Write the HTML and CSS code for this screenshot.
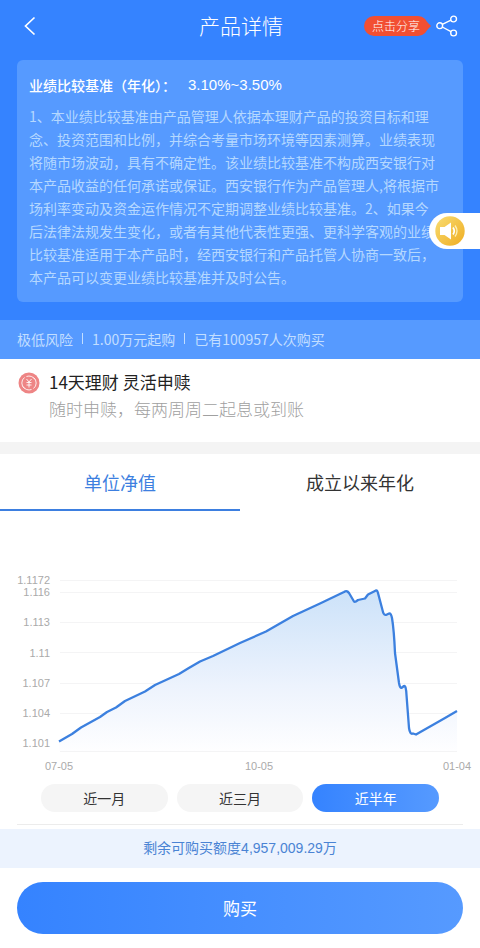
FILE: index.html
```html
<!DOCTYPE html>
<html lang="zh-CN">
<head>
<meta charset="utf-8">
<meta name="viewport" content="width=device-width, initial-scale=1">
<title>产品详情</title>
<link rel="stylesheet" href="styles.css">
</head>
<body>
<header class="hero">
  <nav class="topbar">
    <button class="icon-button back" type="button" aria-label="返回">
      <svg width="12" height="20" viewBox="0 0 12 20"><path d="M10.500 1.500 1.500 10l9 8.500" fill="none" stroke="#fff" stroke-width="1.700"/></svg>
    </button>
    <h1 class="title">产品详情</h1>
    <div class="share">
      <span class="share-tip">点击分享</span>
      <button class="icon-button" type="button" aria-label="分享">
        <svg width="22" height="22" viewBox="0 0 22 22" fill="none" stroke="#fff" stroke-width="1.400"><circle cx="3.700" cy="10.700" r="2.900"/><circle cx="17.600" cy="4" r="2.900"/><circle cx="17.600" cy="18" r="2.900"/><path d="M6.300 9.400 15 5.200M6.300 12l8.700 4.700"/></svg>
      </button>
    </div>
  </nav>
  <section class="benchmark">
    <h2 class="benchmark-title">业绩比较基准（年化）：<span class="rate">3.10%~3.50%</span></h2>
    <p class="benchmark-text">1、本业绩比较基准由产品管理人依据本理财产品的投资目标和理<br>念、投资范围和比例，并综合考量市场环境等因素测算。业绩表现<br>将随市场波动，具有不确定性。该业绩比较基准不构成西安银行对<br>本产品收益的任何承诺或保证。西安银行作为产品管理人,将根据市<br>场利率变动及资金运作情况不定期调整业绩比较基准。2、如果今<br>后法律法规发生变化，或者有其他代表性更强、更科学客观的业绩<br>比较基准适用于本产品时，经西安银行和产品托管人协商一致后，<br>本产品可以变更业绩比较基准并及时公告。</p>
  </section>
  <div class="facts"><span>极低风险</span><i class="bar"></i><span>1.00万元起购</span><i class="bar"></i><span>已有100957人次购买</span></div>
  <button class="speaker" type="button" aria-label="语音播报">
    <svg width="30" height="30" viewBox="0 0 30 30">
      <defs><linearGradient id="gold" x1="0" y1="0" x2="1" y2="1"><stop offset="0" stop-color="#f8dc72"/><stop offset="1" stop-color="#efad22"/></linearGradient></defs>
      <circle cx="15" cy="15" r="14.700" fill="url(#gold)"/>
      <path d="M5 11h4.500l6.500-4.500v17l-6.500-4.500H5z" fill="#fff"/>
      <path d="M18 11.500q2.500 3.500 0 7" fill="none" stroke="#fff" stroke-width="1.700"/>
      <path d="M20 9.500q4 5.500 0 11" fill="none" stroke="#fdf0b8" stroke-width="1.300"/>
    </svg>
  </button>
</header>
<main>
  <section class="product">
    <svg class="coin" width="22" height="22" viewBox="0 0 22 22" fill="none" stroke="#fff">
      <circle cx="11" cy="11" r="10.500" fill="#ee8585" stroke="none"/>
      <path d="M6.500 5.500a7 7 0 0 0 0 11M8.500 4.500a7 7 0 0 1 8.500 3M15.500 16.500a7 7 0 0 0 0-11M5 14.500a7 7 0 0 0 8.500 3" stroke-opacity=".85" stroke-width="1"/>
      <path d="m8.500 7 2.500 3 2.500-3M11 10v5.500M8.500 10.500h5M8.500 13h5" stroke-opacity=".85" stroke-width="1"/>
    </svg>
    <div>
      <h2 class="product-name">14天理财 灵活申赎</h2>
      <p class="product-desc">随时申赎，每两周周二起息或到账</p>
    </div>
  </section>
  <div class="tabs" role="tablist">
    <button class="tab active" type="button" role="tab" aria-selected="true">单位净值</button>
    <button class="tab" type="button" role="tab" aria-selected="false">成立以来年化</button>
  </div>
  <svg class="chart" viewBox="0 0 480 218" role="img" aria-label="单位净值走势">
    <defs><linearGradient id="area" x1="0" y1="0" x2="0" y2="1"><stop offset="0" stop-color="#cce2f9"/><stop offset=".6" stop-color="#edf3fd"/><stop offset="1" stop-color="#fefeff"/></linearGradient></defs>
    <path class="grid" d="M60 21.500H457M60 33.500H457M60 63.500H457M60 93.500H457M60 124.500H457M60 154.500H457M60 184.500H457M60 192.500H457"/>
    <path fill="url(#area)" d="M59 182.500 72 175 81 168.500 100 158 107 153 116 148.500 125 142 145 132.500 155 126 179 115 188 109.500 200 102.500 213 97 240 84 266 72.500 293 57 320 44.500 344 33Q347 31 349 34L354 42.500Q355 43.500 358 41L365 39.500 368 35.500 375 32Q377 30 378 34L383 53Q384 57 387 55.500L389 54.500Q391 54 392 59 394 71 395 94L399 124Q400 130 402 128.500L404 127Q406 126 406.500 136L409 169Q410 176 413 174.500L416 175.500 445 159 457 152V192H59z"/>
    <path class="line" d="M59 182.500 72 175 81 168.500 100 158 107 153 116 148.500 125 142 145 132.500 155 126 179 115 188 109.500 200 102.500 213 97 240 84 266 72.500 293 57 320 44.500 344 33Q347 31 349 34L354 42.500Q355 43.500 358 41L365 39.500 368 35.500 375 32Q377 30 378 34L383 53Q384 57 387 55.500L389 54.500Q391 54 392 59 394 71 395 94L399 124Q400 130 402 128.500L404 127Q406 126 406.500 136L409 169Q410 176 413 174.500L416 175.500 445 159 457 152"/>
    <g class="labels y-labels">
      <text x="50" y="25">1.1172</text><text x="50" y="37">1.116</text><text x="50" y="67">1.113</text><text x="50" y="98">1.11</text><text x="50" y="128">1.107</text><text x="50" y="158">1.104</text><text x="50" y="188">1.101</text>
    </g>
    <g class="labels x-labels">
      <text x="59" y="211">07-05</text><text x="259" y="211">10-05</text><text x="457" y="211">01-04</text>
    </g>
  </svg>
  <div class="periods">
    <button class="period" type="button">近一月</button>
    <button class="period" type="button">近三月</button>
    <button class="period selected" type="button">近半年</button>
  </div>
</main>
<footer>
  <p class="quota">剩余可购买额度4,957,009.29万</p>
  <div class="buy-area"><button class="buy" type="button">购买</button></div>
</footer>
</body>
</html>
```
FILE: styles.css
```css
* { box-sizing: border-box; }
body {
  margin: 0;
  background: #fff;
  color: #333;
  font-family: "Noto Sans CJK SC", sans-serif;
  font-size: 14px;
  font-weight: 400;
}
h1, h2, p { margin: 0; font-weight: inherit; }
button {
  margin: 0;
  padding: 0;
  border: 0;
  background: none;
  color: inherit;
  font: inherit;
  cursor: pointer;
}
svg { display: block; }

.hero { position: relative; background: #3583ff; color: #fff; }
.topbar {
  display: grid;
  grid-template-columns: 1fr auto 1fr;
  align-items: center;
  height: 52px;
  padding: 0 22px 0 24px;
}
.back { justify-self: start; }
.title { padding-bottom: 2px; font-size: 21px; font-weight: 300; line-height: 28px; }
.share { display: flex; justify-self: end; align-items: center; gap: 8px; }
.share-tip {
  position: relative;
  padding: 0 8px;
  border-radius: 10px;
  background: #f24f32;
  font-size: 12px;
  font-weight: 300;
  line-height: 20px;
}
.share-tip::after {
  content: "";
  position: absolute;
  top: 6px;
  right: -3px;
  border: 4px solid transparent;
  border-right: 0;
  border-left-color: #f24f32;
}
.benchmark {
  margin: 8px 17px 18px;
  padding: 13px 12px;
  border-radius: 6px;
  background: #569aff;
}
.benchmark-title {
  display: flex;
  align-items: center;
  margin-bottom: 8px;
  font-size: 14px;
  font-weight: 500;
  line-height: 24px;
}
.rate { margin-left: 12px; font-family: "Liberation Sans", sans-serif; font-size: 15px; font-weight: 400; }
.benchmark-text { color: #b5d8ff; line-height: 23px; white-space: nowrap; }
.facts {
  display: flex;
  align-items: center;
  gap: 9px;
  height: 39px;
  padding: 0 17px 2px;
  background: #569aff;
  color: #c2deff;
}
.bar { width: 1px; height: 11px; background: #c2deff; }
.speaker {
  position: absolute;
  top: 213px;
  right: 0;
  width: 51px;
  height: 36px;
  padding-left: 6px;
  border-radius: 18px 0 0 18px;
  background: #fff;
}

.product {
  display: flex;
  gap: 9px;
  padding: 9px 18px 20px;
  border-bottom: 12px solid #f4f4f4;
}
.coin { margin-top: 4px; }
.product-name, .product-desc { font-size: 17px; line-height: 27px; }
.product-name { color: #222; }
.product-desc { color: #a0a0a0; font-weight: 300; }
.tabs { display: grid; grid-template-columns: 1fr 1fr; }
.tab { height: 57px; border-bottom: 2px solid transparent; font-size: 18px; }
.tab.active { border-color: #3d7fe0; color: #3d7fe0; }
.chart { width: 100%; margin-top: 48px; }
.grid { stroke: #f4f4f5; }
.line { fill: none; stroke: #3c80df; stroke-width: 2.300; stroke-linejoin: round; }
.labels { fill: #aaa; font-family: "Liberation Sans", sans-serif; font-size: 11px; }
.y-labels { text-anchor: end; }
.x-labels { text-anchor: middle; }
.periods {
  display: grid;
  grid-template-columns: repeat(3, 1fr);
  gap: 9px;
  margin: 7px 17px 4px;
  padding: 0 24px 12px;
  border-bottom: 1px solid #ececec;
}
.period { height: 28px; border-radius: 14px; background: #f5f5f5; }
.period.selected { background: linear-gradient(90deg, #3583ff, #569aff); color: #fff; }
.quota {
  background: #ecf3fe;
  color: #4a83d4;
  font-family: "Liberation Sans", "Noto Sans CJK SC", sans-serif;
  line-height: 39px;
  text-align: center;
}
.buy-area { padding: 14px 17px; }
.buy {
  width: 100%;
  height: 52px;
  padding-bottom: 2px;
  border-radius: 26px;
  background: linear-gradient(90deg, #3583ff, #569aff);
  color: #fff;
  font-size: 17px;
}
```
